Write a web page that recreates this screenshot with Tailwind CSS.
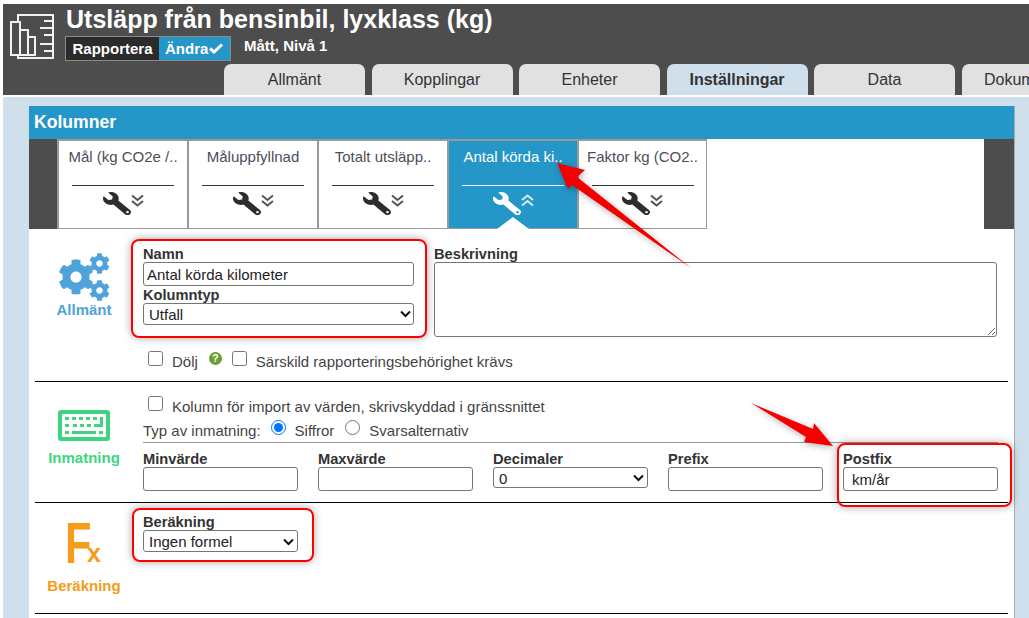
<!DOCTYPE html>
<html lang="sv">
<head>
  <meta charset="UTF-8" />
  <meta name="viewport" content="width=device-width, initial-scale=1.0" />
  <title>Kolumner</title>
  <script src="https://cdn.jsdelivr.net/npm/@tailwindcss/browser@4"></script>
</head>
<body class="relative w-[1029px] h-[618px] overflow-hidden bg-white pt-[4px] pl-[3px] font-['Liberation_Sans',Arial,sans-serif] text-[15px] text-[#333]">

  <!-- shared icons -->
  <svg class="hidden">
    <symbol id="cog" viewBox="0 0 512 512"><path d="M487.4 315.7l-42.6-24.6c4.3-23.2 4.3-47 0-70.2l42.6-24.6c4.9-2.8 7.1-8.6 5.5-14-11.1-35.6-30-67.8-54.7-94.6-3.8-4.1-10-5.1-14.8-2.3L380.8 110c-17.9-15.4-38.5-27.3-60.8-35.1V25.8c0-5.6-3.9-10.5-9.4-11.7-36.7-8.2-74.3-7.8-109.2 0-5.5 1.2-9.4 6.1-9.4 11.7V75c-22.2 7.9-42.8 19.8-60.8 35.1L88.7 85.5c-4.9-2.8-11-1.9-14.8 2.3-24.7 26.7-43.6 58.9-54.7 94.6-1.7 5.4.6 11.2 5.5 14L67.3 221c-4.3 23.2-4.3 47 0 70.2l-42.6 24.6c-4.9 2.8-7.1 8.6-5.5 14 11.1 35.6 30 67.8 54.7 94.6 3.8 4.1 10 5.1 14.8 2.3l42.6-24.6c17.9 15.4 38.5 27.3 60.8 35.1v49.2c0 5.6 3.9 10.5 9.4 11.7 36.7 8.2 74.3 7.8 109.2 0 5.5-1.2 9.4-6.1 9.4-11.7v-49.2c22.2-7.9 42.8-19.8 60.8-35.1l42.6 24.6c4.9 2.8 11 1.9 14.8-2.3 24.7-26.7 43.6-58.9 54.7-94.6 1.5-5.5-.7-11.3-5.6-14.1zM256 336c-44.1 0-80-35.9-80-80s35.9-80 80-80 80 35.9 80 80-35.9 80-80 80z"/></symbol>
    <symbol id="wrench" viewBox="0 0 512 512" preserveAspectRatio="none"><path transform="translate(512 0) scale(-1 1)" d="M507.73 109.1c-2.24-9.03-13.54-12.09-20.12-5.51l-74.36 74.36-67.88-11.31-11.31-67.88 74.36-74.36c6.62-6.62 3.43-17.9-5.66-20.16-47.38-11.74-99.55.91-136.58 37.93-39.64 39.64-50.55 97.1-34.05 147.2L18.74 402.76c-24.99 24.99-24.99 65.51 0 90.5 24.99 24.99 65.51 24.99 90.5 0l213.21-213.21c50.12 16.71 107.47 5.68 147.37-34.22 37.07-37.07 49.7-89.32 37.91-136.73zM64 472c-13.25 0-24-10.75-24-24 0-13.26 10.75-24 24-24s24 10.74 24 24c0 13.25-10.75 24-24 24z"/></symbol>
  </svg>

  <!-- Header -->
  <div class="h-[91px] bg-[#4d4d4d] flex flex-col overflow-hidden">
    <div class="flex h-[60px]">
      <svg class="ml-[5px] mt-[9px] shrink-0" width="48" height="48" viewBox="9 10 48 48" fill="none" stroke="#f2f2f2" stroke-width="2">
        <path d="M19 19V12H54V18H45M54 18V25H41M54 25V32H45M54 32V41H41M54 41V48H45M54 48V55H19V52"/>
        <rect x="12" y="19" width="9" height="33"/>
        <rect x="21" y="27" width="8" height="25"/>
        <rect x="29" y="34" width="7" height="18"/>
      </svg>
      <div class="ml-[10px]">
        <div class="mt-[1px] h-[28px] leading-[28px] text-[25px] font-bold text-white whitespace-nowrap">Utsläpp från bensinbil, lyxklass (kg)</div>
        <div class="mt-[3px] -ml-[1px] flex items-center">
          <div class="flex h-[25px] border border-[#8a8a8a] font-bold text-white leading-[23px]">
            <span class="w-[93px] bg-[#2b2b2b] text-center">Rapportera</span>
            <span class="w-[71px] bg-[#2596c8] pl-[6px] flex items-center">Ändra
              <svg class="ml-[1px]" width="14" height="11" viewBox="0 0 14 11" fill="none" stroke="white" stroke-width="3"><path d="M1 5.5 5 9 13 1.5"/></svg>
            </span>
          </div>
          <span class="ml-[13px] -mt-[5px] font-bold text-white">Mått, Nivå 1</span>
        </div>
      </div>
    </div>
    <div class="mt-auto flex gap-[6.5px] pl-[221px] text-[16px] text-[#333] text-center leading-[31px] whitespace-nowrap">
      <div class="shrink-0 w-[141px] h-[31px] bg-[#e1e1e1] rounded-t-[7px]">Allmänt</div>
      <div class="shrink-0 w-[141px] h-[31px] bg-[#e1e1e1] rounded-t-[7px]">Kopplingar</div>
      <div class="shrink-0 w-[141px] h-[31px] bg-[#e1e1e1] rounded-t-[7px]">Enheter</div>
      <div class="shrink-0 w-[141px] h-[31px] bg-[#cfe0ec] rounded-t-[7px] font-bold">Inställningar</div>
      <div class="shrink-0 w-[141px] h-[31px] bg-[#e1e1e1] rounded-t-[7px]">Data</div>
      <div class="shrink-0 w-[141px] h-[31px] bg-[#e1e1e1] rounded-t-[7px]">Dokumentera</div>
    </div>
  </div>

  <!-- Page background with panel -->
  <div class="mt-[2px] h-[521px] bg-[#cfe0ec] pt-[9px] pl-[26px] pr-[14px]">
    <div class="h-[512px] bg-white border-r border-[#aaa]">
      <div class="h-[33px] bg-[#2596c8] pl-[5px] text-[17.6px] font-bold text-white leading-[32px]">Kolumner</div>

      <!-- Column tabs -->
      <div class="flex h-[90px] bg-white">
        <div class="w-[28px] bg-[#4d4d4d]"></div>
        <div class="w-[130px] border-2 border-r-0 border-b border-[#999] bg-white text-center text-[#4a4f5a] whitespace-nowrap">
          <div class="pt-[6px] h-[26px] leading-[20px]">Mål (kg CO2e /..</div>
          <div class="mx-auto mt-[18px] w-[102px] border-t border-[#333]"></div>
          <div class="mt-[6px] flex justify-center">
            <svg width="28" height="23" fill="#2d2d2d"><use href="#wrench"/></svg>
            <svg class="mt-[2px]" width="13" height="14" viewBox="0 0 13 14" fill="none" stroke="#555" stroke-width="2"><path d="M1 1.5 6.5 6 12 1.5M1 7 6.5 11.5 12 7"/></svg>
          </div>
        </div>
        <div class="w-[130px] border-2 border-r-0 border-b border-[#999] bg-white text-center text-[#4a4f5a] whitespace-nowrap">
          <div class="pt-[6px] h-[26px] leading-[20px]">Måluppfyllnad</div>
          <div class="mx-auto mt-[18px] w-[102px] border-t border-[#333]"></div>
          <div class="mt-[6px] flex justify-center">
            <svg width="28" height="23" fill="#2d2d2d"><use href="#wrench"/></svg>
            <svg class="mt-[2px]" width="13" height="14" viewBox="0 0 13 14" fill="none" stroke="#555" stroke-width="2"><path d="M1 1.5 6.5 6 12 1.5M1 7 6.5 11.5 12 7"/></svg>
          </div>
        </div>
        <div class="w-[130px] border-2 border-r-0 border-b border-[#999] bg-white text-center text-[#4a4f5a] whitespace-nowrap">
          <div class="pt-[6px] h-[26px] leading-[20px]">Totalt utsläpp..</div>
          <div class="mx-auto mt-[18px] w-[102px] border-t border-[#333]"></div>
          <div class="mt-[6px] flex justify-center">
            <svg width="28" height="23" fill="#2d2d2d"><use href="#wrench"/></svg>
            <svg class="mt-[2px]" width="13" height="14" viewBox="0 0 13 14" fill="none" stroke="#555" stroke-width="2"><path d="M1 1.5 6.5 6 12 1.5M1 7 6.5 11.5 12 7"/></svg>
          </div>
        </div>
        <div class="relative w-[130px] border-2 border-r-0 border-b border-[#999] bg-[#2596c8] text-center text-white whitespace-nowrap">
          <div class="pt-[6px] h-[26px] leading-[20px]">Antal körda ki..</div>
          <div class="mx-auto mt-[18px] w-[102px] border-t border-white"></div>
          <div class="mt-[6px] flex justify-center">
            <svg width="28" height="23" fill="#fff"><use href="#wrench"/></svg>
            <svg class="mt-[2px]" width="13" height="14" viewBox="0 0 13 14" fill="none" stroke="#d5ebf5" stroke-width="2"><path d="M1 6 6.5 1.5 12 6M1 11.5 6.5 7 12 11.5"/></svg>
          </div>
          <svg class="absolute left-[48px] bottom-[-1px]" width="32" height="12" fill="#fff"><path d="M0 12 16 0 32 12Z"/></svg>
        </div>
        <div class="w-[130px] border-2 border-r border-b border-[#999] bg-white text-center text-[#4a4f5a] whitespace-nowrap">
          <div class="pt-[6px] h-[26px] leading-[20px]">Faktor kg (CO2..</div>
          <div class="mx-auto mt-[18px] w-[102px] border-t border-[#333]"></div>
          <div class="mt-[6px] flex justify-center">
            <svg width="28" height="23" fill="#2d2d2d"><use href="#wrench"/></svg>
            <svg class="mt-[2px]" width="13" height="14" viewBox="0 0 13 14" fill="none" stroke="#555" stroke-width="2"><path d="M1 1.5 6.5 6 12 1.5M1 7 6.5 11.5 12 7"/></svg>
          </div>
        </div>
        <div class="flex-1"></div>
        <div class="w-[30px] bg-[#4d4d4d]"></div>
      </div>

      <div class="mx-[6px]">
        <!-- Allmänt -->
        <div class="flex h-[153px] border-b border-black">
          <div class="w-[98px] mr-[10px] shrink-0 flex flex-col items-center pt-[24px]">
            <svg width="52" height="48" viewBox="0 0 52 48" fill="#4fa3da">
              <use href="#cog" x="0" y="6" width="36" height="36"/>
              <use href="#cog" x="31" y="0" width="21" height="21"/>
              <use href="#cog" x="31" y="27" width="21" height="21"/>
            </svg>
            <div class="mt-[1px] font-bold text-[#4fa3da] leading-[16px]">Allmänt</div>
          </div>
          <div class="flex-1">
            <div class="flex pt-[17px]">
              <div class="w-[271px]">
                <label class="block text-[14.67px] font-bold leading-[16px]">Namn</label>
                <input class="block w-full h-[24px] border border-[#767676] rounded-[3px] px-[3px] text-[#222]" value="Antal körda kilometer" />
                <label class="block pt-[1px] text-[14.67px] font-bold leading-[16px]">Kolumntyp</label>
                <div class="relative">
                  <select class="block w-full h-[22px] appearance-none border border-[#767676] rounded-[3px] bg-white pl-[5px] text-[#222]"><option>Utfall</option></select>
                  <svg class="absolute right-[3px] top-[7px]" width="11" height="8" viewBox="0 0 11 8" fill="none" stroke="#111" stroke-width="2"><path d="M1 1.5 5.5 6 10 1.5"/></svg>
                </div>
              </div>
              <div class="ml-[20px] w-[563px]">
                <label class="block text-[14.67px] font-bold leading-[16px]">Beskrivning</label>
                <textarea class="block w-full h-[75px] border border-[#767676] rounded-[3px]"></textarea>
              </div>
            </div>
            <div class="mt-[14px] ml-[5px] flex items-start text-[#444]">
              <input type="checkbox" class="w-[15px] h-[15px]" />
              <span class="ml-[9px] mt-[3px] leading-[16px]">Dölj</span>
              <span class="ml-[11px] mt-[1px] w-[13px] h-[13px] rounded-full bg-[#6b9e2f] text-white text-[11px] font-bold leading-[13px] text-center">?</span>
              <input type="checkbox" class="ml-[10px] w-[15px] h-[15px]" />
              <span class="ml-[9px] mt-[3px] leading-[16px]">Särskild rapporteringsbehörighet krävs</span>
            </div>
          </div>
        </div>

        <!-- Inmatning -->
        <div class="flex h-[121px] border-b border-black">
          <div class="w-[98px] mr-[10px] shrink-0 flex flex-col items-center pt-[28px]">
            <svg width="52" height="31" viewBox="0 0 52 31" fill="#3fd47f">
              <path fill-rule="evenodd" d="M3 0H49A3 3 0 0 1 52 3V28A3 3 0 0 1 49 31H3A3 3 0 0 1 0 28V3A3 3 0 0 1 3 0ZM4 4V27H48V4Z"/>
              <path d="M7 7h4v3H7zM14 7h4v3h-4zM21 7h4v3h-4zM28 7h4v3h-4zM35 7h4v3h-4zM42 7h3v10h-9v-3h6zM7 14h4v3H7zM15 14h4v3h-4zM22 14h4v3h-4zM29 14h4v3h-4zM7 21h4v3H7zM14 21h24v3H14zM41 21h4v3h-4z"/>
            </svg>
            <div class="mt-[9px] font-bold text-[#3fd47f] leading-[16px]">Inmatning</div>
          </div>
          <div class="flex-1">
            <div class="mt-[14px] ml-[5px] flex items-start h-[16px] text-[#444]">
              <input type="checkbox" class="w-[15px] h-[15px]" />
              <span class="ml-[9px] mt-[3px] leading-[16px]">Kolumn för import av värden, skrivskyddad i gränssnittet</span>
            </div>
            <div class="mt-[8px] w-[855px] h-[23px] flex items-start border-b border-[#999] text-[#444] pt-[3px] leading-[16px]">
              <span>Typ av inmatning:</span>
              <input type="radio" checked class="ml-[10px] -mt-[3px] w-[15px] h-[15px]" />
              <span class="ml-[9px]">Siffror</span>
              <input type="radio" class="ml-[11px] -mt-[3px] w-[15px] h-[15px]" />
              <span class="ml-[9px]">Svarsalternativ</span>
            </div>
            <div class="mt-[9px] grid grid-cols-[155px_155px_155px_155px_155px] gap-x-[20px]">
              <div><label class="block text-[14.67px] font-bold leading-[15px]">Minvärde</label><input class="block w-full h-[24px] border border-[#767676] rounded-[3px]" /></div>
              <div><label class="block text-[14.67px] font-bold leading-[15px]">Maxvärde</label><input class="block w-full h-[24px] border border-[#767676] rounded-[3px]" /></div>
              <div>
                <label class="block text-[14.67px] font-bold leading-[15px]">Decimaler</label>
                <div class="relative">
                  <select class="block w-full h-[21px] appearance-none border border-[#767676] rounded-[3px] bg-white pl-[5px] text-[#222]"><option>0</option></select>
                  <svg class="absolute right-[4px] top-[7px]" width="11" height="8" viewBox="0 0 11 8" fill="none" stroke="#111" stroke-width="2"><path d="M1 1.5 5.5 6 10 1.5"/></svg>
                </div>
              </div>
              <div><label class="block text-[14.67px] font-bold leading-[15px]">Prefix</label><input class="block w-full h-[24px] border border-[#767676] rounded-[3px]" /></div>
              <div><label class="block text-[14.67px] font-bold leading-[15px]">Postfix</label><input class="block w-full h-[24px] border border-[#767676] rounded-[3px] px-[8px] text-[#222]" value="km/år" /></div>
            </div>
          </div>
        </div>

        <!-- Beräkning -->
        <div class="flex h-[111px] border-b border-black">
          <div class="w-[98px] mr-[10px] shrink-0 flex flex-col items-center">
            <div class="relative h-[73px] w-[50px] text-[#f59c1a] font-bold">
              <span class="absolute left-[6px] top-[8px] origin-left scale-x-[0.76] text-[57px] leading-[65px] tracking-[-6px]">F</span>
              <span class="absolute left-[28px] top-[36px] text-[25px] leading-[28px]">x</span>
            </div>
            <div class="mt-[2px] font-bold text-[#f59c1a] leading-[16px]">Beräkning</div>
          </div>
          <div class="pt-[11px]">
            <label class="block text-[14.67px] font-bold leading-[16px]">Beräkning</label>
            <div class="relative w-[155px]">
              <select class="block w-full h-[22px] appearance-none border border-[#767676] rounded-[3px] bg-white pl-[5px] text-[#222]"><option>Ingen formel</option></select>
              <svg class="absolute right-[4px] top-[8px]" width="11" height="8" viewBox="0 0 11 8" fill="none" stroke="#111" stroke-width="2"><path d="M1 1.5 5.5 6 10 1.5"/></svg>
            </div>
          </div>
        </div>
      </div>
    </div>
  </div>

  <!-- Screenshot annotations -->
  <div class="absolute left-[131px] top-[239px] w-[296px] h-[99px] border-2 border-[#f00] rounded-[8px] shadow-[0_0_8px_rgba(0,0,0,0.35)]"></div>
  <div class="absolute left-[132px] top-[508px] w-[182px] h-[54px] border-2 border-[#f00] rounded-[8px] shadow-[0_0_8px_rgba(0,0,0,0.35)]"></div>
  <div class="absolute left-[837px] top-[443px] w-[175px] h-[64px] border-2 border-[#f00] rounded-[8px] shadow-[0_0_8px_rgba(0,0,0,0.35)]"></div>
  <svg class="absolute left-0 top-0 drop-shadow-[1px_2px_3px_rgba(0,0,0,0.3)]" width="1029" height="618" fill="#f50000">
    <path d="M557 163 585 170 577 177 691 268 572 185 568 189Z"/>
    <path d="M751 403 813 429 814 423 833 446 804 442 806 437Z"/>
  </svg>
</body>
</html>
